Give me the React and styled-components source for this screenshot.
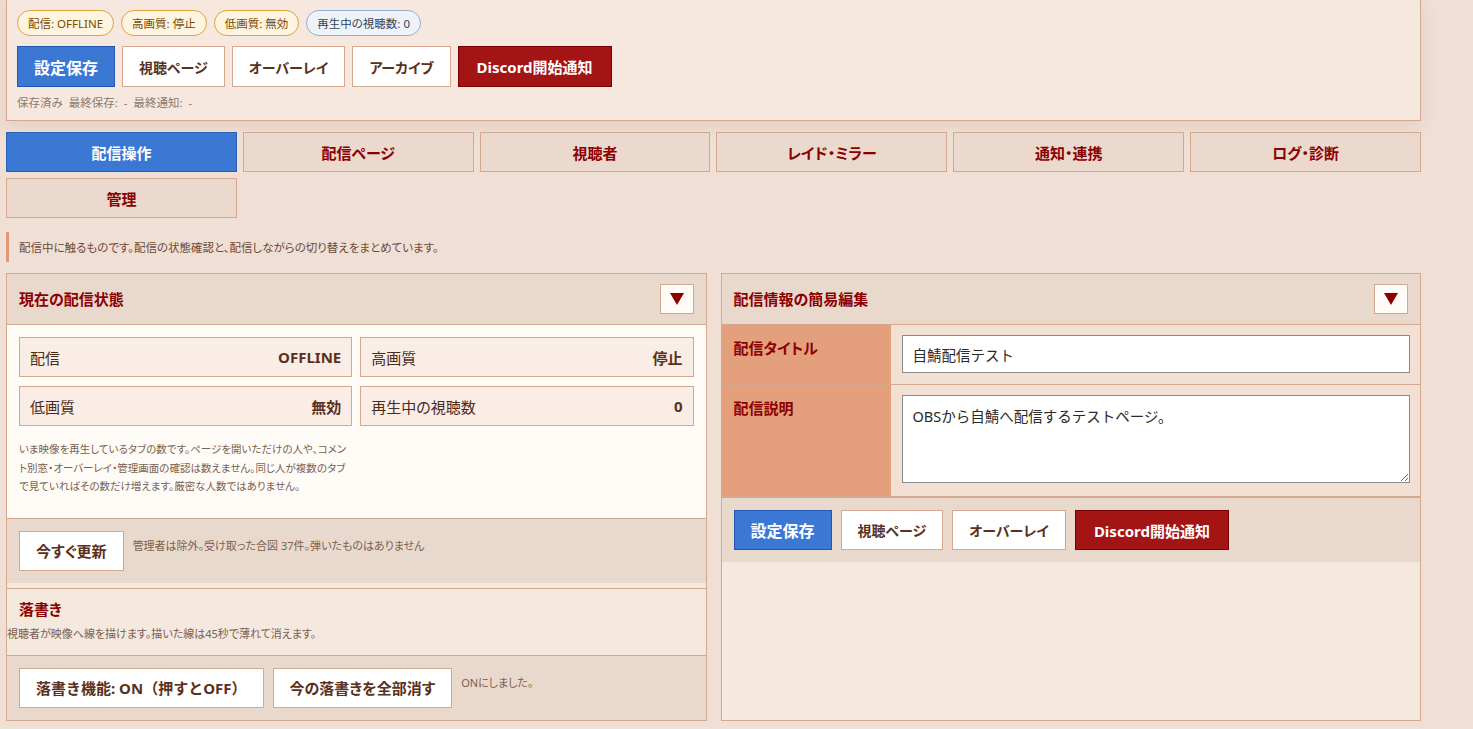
import styled, { createGlobalStyle } from "styled-components";

const GlobalStyle = createGlobalStyle`
  body {
    margin: 0;
    background: #f0dfd5;
    font-family: "Noto Sans", "Noto Sans CJK JP", sans-serif;
    font-feature-settings: "palt";
    color: #4a2a1a;
  }
  * { box-sizing: border-box; }
`;

const Page = styled.div`
  width: 1415px;
  margin-left: 6px;
  padding-bottom: 8px;
`;

const TopCard = styled.section`
  background: #f6e8de;
  border: 1px solid #d3a88e;
  border-top: none;
  padding: 10px 10px 9px;
  box-shadow: 0 4px 16px rgba(120, 70, 40, 0.12);
`;

const BadgeRow = styled.div`
  display: flex;
  gap: 7px;
`;

const Badge = styled.span`
  height: 26px;
  padding: 0 10px;
  border-radius: 13px;
  display: inline-flex;
  align-items: center;
  font-size: 11.5px;
  border: 1px solid ${(p) => (p.$info ? "#97add0" : "#d9a441")};
  background: ${(p) => (p.$info ? "#eef3fa" : "#fff4df")};
  color: ${(p) => (p.$info ? "#34445a" : "#7a4a00")};
`;

const ButtonRow = styled.div`
  display: flex;
  gap: ${(p) => p.$gap || 7}px;
  margin-top: ${(p) => p.$top || 0}px;
  align-items: flex-start;
`;

const variants = {
  primary: "background:#3a78d4;border-color:#2456b0;color:#fff;font-size:16px;",
  danger: "background:#a31515;border-color:#7a0000;color:#fff;padding:0 18px;",
  plain: "background:#fff;border-color:#d3a88e;color:#5a3020;",
};

const Button = styled.button`
  height: ${(p) => p.$h || 41}px;
  padding: 0 16px;
  border: 1px solid;
  font-family: inherit;
  font-feature-settings: ${(p) => (p.$full ? "normal" : '"palt"')};
  font-size: ${(p) => p.$size || 14}px;
  font-weight: 700;
  cursor: pointer;
  white-space: nowrap;
  ${(p) => variants[p.$variant || "plain"]}
`;

const Status = styled.div`
  margin-top: 8px;
  font-size: 11.5px;
  line-height: 16px;
  color: #8a7a70;
  word-spacing: 3px;
`;

const Tabs = styled.nav`
  margin-top: 11px;
  display: grid;
  grid-template-columns: repeat(6, 1fr);
  gap: 6px;
`;

const Tab = styled.button`
  height: 40px;
  border: 1px solid ${(p) => (p.$active ? "#2a5fb8" : "#d3a88e")};
  background: ${(p) => (p.$active ? "#3a78d4" : "#ead9cc")};
  color: ${(p) => (p.$active ? "#fff" : "#8b0000")};
  font-family: inherit;
  font-feature-settings: "palt";
  font-size: 15px;
  font-weight: 700;
`;

const Note = styled.p`
  margin: 14px 0 0;
  height: 30px;
  display: flex;
  align-items: center;
  border-left: 3px solid #e39a72;
  padding-left: 10px;
  font-size: 11.5px;
  color: #6b4a3a;
`;

const Panels = styled.div`
  margin-top: 11px;
  display: grid;
  grid-template-columns: 1fr 1fr;
  gap: 14px;
`;

const Panel = styled.section`
  border: 1px solid #d3a88e;
  background: #f5e8de;
  display: flex;
  flex-direction: column;
`;

const PanelHeader = styled.header`
  height: 51px;
  padding: 0 12px;
  display: flex;
  align-items: center;
  justify-content: space-between;
  background: #e9d9cd;
  border-bottom: 1px solid #d3a88e;
`;

const Title = styled.h2`
  margin: 0;
  font-size: 15px;
  font-weight: 700;
  color: #8b0000;
  line-height: 22px;
`;

const Toggle = styled.button`
  width: 34px;
  height: 30px;
  padding: 0;
  background: #fffcf8;
  border: 1px solid #d3a88e;
  display: flex;
  align-items: center;
  justify-content: center;
`;

const StatusBody = styled.div`
  background: #fffcf8;
  padding: 12px 12px 22px;
  display: grid;
  grid-template-columns: 1fr 1fr;
  gap: 9px 8px;
`;

const Stat = styled.div`
  height: 40px;
  padding: 0 10px;
  display: flex;
  align-items: center;
  justify-content: space-between;
  background: #f9ede6;
  border: 1px solid #d3a88e;
  font-size: 15px;
  color: #4a2a1a;
  b { color: #5a3020; }
`;

const Hint = styled.p`
  margin: 5px 0 0;
  font-size: 10.5px;
  line-height: 18.5px;
  color: #7a6050;
`;

const Footer = styled.div`
  background: #e9d9cd;
  border-top: ${(p) => (p.$noTop ? "none" : "1px solid #d3a88e")};
  padding: 12px;
  display: flex;
  gap: 9px;
  align-items: flex-start;
`;

const FooterNote = styled.span`
  margin-top: 6px;
  font-size: 11px;
  line-height: 18.5px;
  color: #7a6050;
`;

const Section = styled.div`
  margin-top: 5px;
  border-top: 1px solid #d3a88e;
  padding: 9px 0 14px;
  background: #f5e8de;
`;

const SectionTitle = styled(Title)`
  padding: 0 12px;
`;

const SectionDesc = styled.p`
  margin: 7px 0 0;
  font-size: 11px;
  line-height: 14px;
  color: #7a6050;
`;

const Form = styled.div`
  display: grid;
  grid-template-columns: 169px 1fr;
  border-bottom: 2px solid #d3a88e;
`;

const Label = styled.div`
  background: #e4a07c;
  padding: 13px 12px 0;
  font-size: 15px;
  font-weight: 700;
  line-height: 20px;
  color: #8b0000;
  border-bottom: ${(p) => (p.$last ? "none" : "1px solid #d3a88e")};
`;

const Field = styled.div`
  background: #f2e0d4;
  padding: 10px 10px ${(p) => (p.$last ? 13 : 11)}px 11px;
  border-bottom: ${(p) => (p.$last ? "none" : "1px solid #d3a88e")};
`;

const Input = styled.input`
  display: block;
  width: 100%;
  height: 38px;
  border: 1px solid #8a8a8a;
  padding: 0 10px;
  font-family: inherit;
  font-size: 14.5px;
  color: #2a2a2a;
  background: #fff;
`;

const TextArea = styled.textarea`
  display: block;
  width: 100%;
  height: 88px;
  border: 1px solid #8a8a8a;
  padding: 10px;
  font-family: inherit;
  font-size: 14.5px;
  line-height: 20px;
  color: #2a2a2a;
  background: #fff;
`;

const Arrow = () => (
  <svg width="14" height="12" viewBox="0 0 14 12">
    <polygon points="0,0 14,0 7,12" fill="#8b0000" />
  </svg>
);

const tabs = ["配信操作", "配信ページ", "視聴者", "レイド・ミラー", "通知・連携", "ログ・診断", "管理"];

export default function App() {
  return (
    <Page>
      <GlobalStyle />
      <TopCard>
        <BadgeRow>
          <Badge>配信: OFFLINE</Badge>
          <Badge>高画質: 停止</Badge>
          <Badge>低画質: 無効</Badge>
          <Badge $info>再生中の視聴数: 0</Badge>
        </BadgeRow>
        <ButtonRow $top={10}>
          <Button $variant="primary">設定保存</Button>
          <Button>視聴ページ</Button>
          <Button>オーバーレイ</Button>
          <Button>アーカイブ</Button>
          <Button $variant="danger" $size={15}>Discord開始通知</Button>
        </ButtonRow>
        <Status>保存済み 最終保存: - 最終通知: -</Status>
      </TopCard>

      <Tabs>
        {tabs.map((t, i) => (
          <Tab key={t} $active={i === 0}>{t}</Tab>
        ))}
      </Tabs>

      <Note>配信中に触るものです。配信の状態確認と、配信しながらの切り替えをまとめています。</Note>

      <Panels>
        <Panel>
          <PanelHeader>
            <Title>現在の配信状態</Title>
            <Toggle><Arrow /></Toggle>
          </PanelHeader>
          <StatusBody>
            <Stat>配信<b>OFFLINE</b></Stat>
            <Stat>高画質<b>停止</b></Stat>
            <Stat>低画質<b>無効</b></Stat>
            <Stat>再生中の視聴数<b>0</b></Stat>
            <Hint>
              いま映像を再生しているタブの数です。ページを開いただけの人や、コメント別窓・オーバーレイ・管理画面の確認は数えません。同じ人が複数のタブで見ていればその数だけ増えます。厳密な人数ではありません。
            </Hint>
          </StatusBody>
          <Footer>
            <Button $h={40} $size={15}>今すぐ更新</Button>
            <FooterNote>管理者は除外。受け取った合図 37件。弾いたものはありません</FooterNote>
          </Footer>
          <Section>
            <SectionTitle>落書き</SectionTitle>
            <SectionDesc>視聴者が映像へ線を描けます。描いた線は45秒で薄れて消えます。</SectionDesc>
          </Section>
          <Footer>
            <Button $h={40} $size={15} $full>落書き機能: ON（押すとOFF）</Button>
            <Button $h={40} $size={15}>今の落書きを全部消す</Button>
            <FooterNote>ONにしました。</FooterNote>
          </Footer>
        </Panel>

        <Panel>
          <PanelHeader>
            <Title>配信情報の簡易編集</Title>
            <Toggle><Arrow /></Toggle>
          </PanelHeader>
          <Form>
            <Label>配信タイトル</Label>
            <Field>
              <Input defaultValue="自鯖配信テスト" />
            </Field>
            <Label $last>配信説明</Label>
            <Field $last>
              <TextArea defaultValue="OBSから自鯖へ配信するテストページ。" />
            </Field>
          </Form>
          <Footer $noTop>
            <Button $h={40} $variant="primary">設定保存</Button>
            <Button $h={40}>視聴ページ</Button>
            <Button $h={40}>オーバーレイ</Button>
            <Button $h={40} $variant="danger" $size={15}>Discord開始通知</Button>
          </Footer>
        </Panel>
      </Panels>
    </Page>
  );
}
